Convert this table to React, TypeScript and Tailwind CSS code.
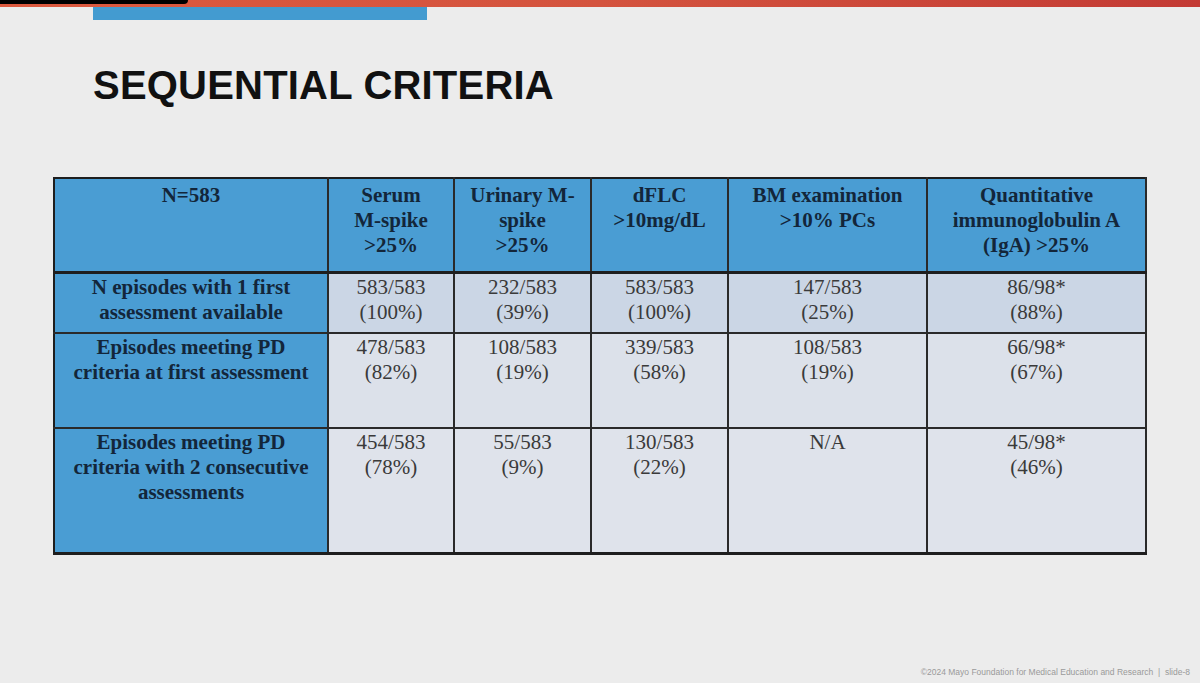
import React from 'react';

type Row = { label: string[]; cells: [string, string][]; bg: string; h: string };

const headers: string[][] = [
  ['Serum', 'M-spike', '>25%'],
  ['Urinary M-', 'spike', '>25%'],
  ['dFLC', '>10mg/dL'],
  ['BM examination', '>10% PCs'],
  ['Quantitative', 'immunoglobulin A', '(IgA) >25%'],
];

const rows: Row[] = [
  {
    label: ['N episodes with 1 first', 'assessment available'],
    cells: [
      ['583/583', '(100%)'],
      ['232/583', '(39%)'],
      ['583/583', '(100%)'],
      ['147/583', '(25%)'],
      ['86/98*', '(88%)'],
    ],
    bg: 'bg-[#cbd6e5]',
    h: 'h-[61px]',
  },
  {
    label: ['Episodes meeting PD', 'criteria at first assessment'],
    cells: [
      ['478/583', '(82%)'],
      ['108/583', '(19%)'],
      ['339/583', '(58%)'],
      ['108/583', '(19%)'],
      ['66/98*', '(67%)'],
    ],
    bg: 'bg-[#dce1ea]',
    h: 'h-[95px]',
  },
  {
    label: ['Episodes meeting PD', 'criteria with 2 consecutive', 'assessments'],
    cells: [
      ['454/583', '(78%)'],
      ['55/583', '(9%)'],
      ['130/583', '(22%)'],
      ['N/A', ''],
      ['45/98*', '(46%)'],
    ],
    bg: 'bg-[#dfe3eb]',
    h: 'h-[125px]',
  },
];

export default function App() {
  return (
    <div className="w-[1200px] h-[683px] bg-[#ececec] flex flex-col overflow-hidden font-['Liberation_Sans',Arial,sans-serif]">
      {/* top accent */}
      <div className="relative h-[7px] bg-gradient-to-r from-[#dd5a3f] via-[#d4533e] to-[#c33a34]">
        <div className="absolute left-0 top-0 h-[4px] w-[188px] bg-black rounded-br-[6px]" />
      </div>
      <div className="ml-[93px] w-[334px] h-[13px] bg-[#439bd0]" />

      <h1 className="ml-[93px] mt-[45px] text-[40px] leading-none font-bold text-[#111] tracking-[0.2px]">
        SEQUENTIAL CRITERIA
      </h1>

      <table className="ml-[53px] mt-[72px] w-[1092px] table-fixed border-collapse border-2 border-b-[3px] border-[#1e1e1e] font-['Liberation_Serif','Times_New_Roman',serif] text-[21px] leading-[25px]">
        <colgroup>
          <col className="w-[274px]" />
          <col className="w-[126px]" />
          <col className="w-[137px]" />
          <col className="w-[137px]" />
          <col className="w-[199px]" />
          <col className="w-[219px]" />
        </colgroup>
        <thead>
          <tr className="h-[94px] border-b-[3px] border-[#1e1e1e]">
            <th className="align-top bg-[#4a9dd3] text-[#13263a] font-bold pt-[4px] border-r-2 border-[#2a2a2a]">N=583</th>
            {headers.map((h, i) => (
              <th key={i} className="align-top bg-[#4a9dd3] text-[#13263a] font-bold pt-[4px] border-r-2 border-[#2a2a2a]">
                {h.map((l, j) => (
                  <div key={j}>{l}</div>
                ))}
              </th>
            ))}
          </tr>
        </thead>
        <tbody>
          {rows.map((r, i) => (
            <tr key={i} className={`${r.h} border-b-2 border-[#2a2a2a]`}>
              <td className="align-top bg-[#4a9dd3] text-[#13263a] font-bold text-center pt-[1px] border-r-2 border-[#2a2a2a]">
                {r.label.map((l, j) => (
                  <div key={j}>{l}</div>
                ))}
              </td>
              {r.cells.map((c, j) => (
                <td key={j} className={`align-top ${r.bg} text-[#3a3a3a] text-center pt-[1px] border-r-2 border-[#2a2a2a]`}>
                  <div>{c[0]}</div>
                  {c[1] && <div>{c[1]}</div>}
                </td>
              ))}
            </tr>
          ))}
        </tbody>
      </table>

      <div className="mt-auto self-end pr-[10px] pb-[4px] text-[8.5px] text-[#9a9a9a]">
        ©2024 Mayo Foundation for Medical Education and Research &nbsp;|&nbsp; slide-8
      </div>
    </div>
  );
}
